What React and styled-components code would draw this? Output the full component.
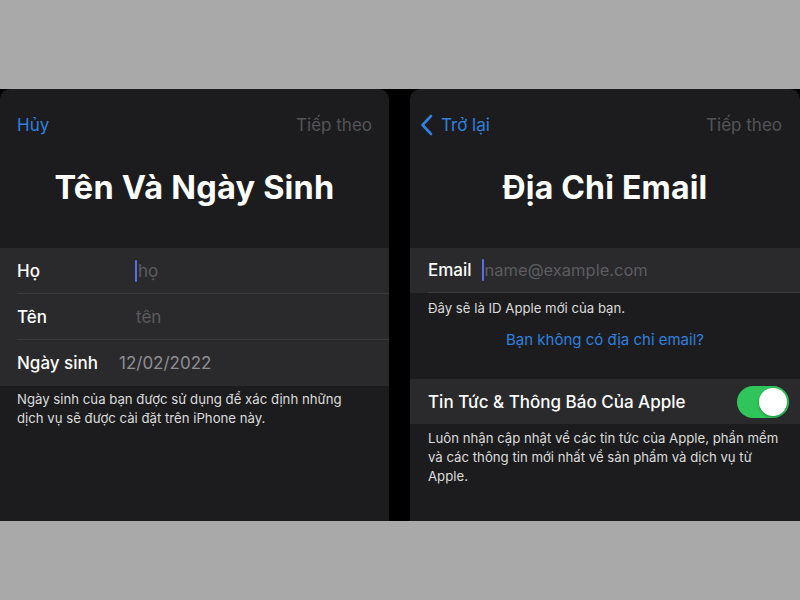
import React from "react"
import styled, { createGlobalStyle } from "styled-components"

const Global = createGlobalStyle`
  html, body {
    margin: 0;
    padding: 0;
    background: #a9a9a9;
    font-family: Inter, "Noto Sans", "Liberation Sans", sans-serif;
    -webkit-font-smoothing: antialiased;
  }
`

const Page = styled.div`
  width: 800px;
  height: 600px;
  display: flex;
  flex-direction: column;
  background: #a9a9a9;
  overflow: hidden;
`

const Band = styled.div`
  margin-top: 89px;
  height: 432px;
  background: #000;
  display: flex;
  gap: 21px;
`

const Sheet = styled.div`
  width: ${(p) => p.$width}px;
  flex: none;
  background: #1c1c1e;
  border-radius: 10px 10px 0 0;
  display: flex;
  flex-direction: column;
`

const Nav = styled.div`
  height: 22px;
  margin-top: 25px;
  padding: 0 ${(p) => p.$right}px 0 ${(p) => p.$left}px;
  display: flex;
  align-items: center;
  justify-content: space-between;
  font-size: 17px;
`

const NavButton = styled.span`
  display: flex;
  align-items: center;
  gap: 8px;
  color: ${(p) => (p.$dim ? "#545458" : "#2f80df")};
`

const Title = styled.h1`
  margin: 33px 0 41px;
  height: 38px;
  line-height: 38px;
  text-align: center;
  color: #fff;
  font-size: ${(p) => p.$size}px;
  font-weight: 700;
  letter-spacing: 0.2px;
`

const Group = styled.div`
  background: #2a2a2c;
`

const Row = styled.div`
  height: ${(p) => p.$h || 46}px;
  margin-left: ${(p) => p.$inset}px;
  padding-right: 11px;
  display: flex;
  align-items: center;
  border-bottom: ${(p) => (p.$last ? "none" : "1px solid #3a3a3c")};
  box-sizing: border-box;
`

const Label = styled.span`
  width: ${(p) => (p.$w ? `${p.$w}px` : "auto")};
  margin-right: ${(p) => p.$gap || 0}px;
  flex: none;
  color: #fff;
  font-size: 17px;
  font-weight: 500;
`

const Field = styled.span`
  display: flex;
  align-items: center;
  color: ${(p) => (p.$value ? "#8e8e93" : "#5c5c60")};
  font-size: ${(p) => p.$size || 17}px;
`

const Caret = styled.span`
  width: 2px;
  height: 22px;
  margin-right: 1px;
  border-radius: 1px;
  background: #5a6de3;
`

const Note = styled.p`
  margin: 0;
  padding: ${(p) => p.$top}px 12px 0 ${(p) => p.$left}px;
  color: #dcdcdc;
  font-size: 13.2px;
  line-height: 19px;
`

const Link = styled.div`
  margin-top: 12px;
  text-align: center;
  color: #2f80df;
  font-size: 15px;
  line-height: 20px;
`

const ToggleRow = styled.div`
  margin-top: 29px;
  height: 45px;
  padding: 0 11px 0 18px;
  background: #2a2a2c;
  display: flex;
  align-items: center;
  justify-content: space-between;
  color: #fff;
  font-size: 17px;
  font-weight: 500;
`

const Switch = styled.span`
  position: relative;
  width: 52px;
  height: 32px;
  border-radius: 16px;
  background: #30c55a;
`

const Knob = styled.span`
  position: absolute;
  top: 2px;
  right: 2px;
  width: 28px;
  height: 28px;
  border-radius: 50%;
  background: #fff;
  box-shadow: 0 1px 3px rgba(0, 0, 0, 0.3);
`

function Chevron() {
  return (
    <svg width="13" height="22" viewBox="0 0 13 22">
      <path
        d="M11 2 L2.5 11 L11 20"
        fill="none"
        stroke="#2f80df"
        strokeWidth="2.6"
        strokeLinecap="round"
        strokeLinejoin="round"
      />
    </svg>
  )
}

export default function App() {
  return (
    <Page>
      <Global />
      <Band>
        <Sheet $width={389}>
          <Nav $left={17} $right={17}>
            <NavButton>Hủy</NavButton>
            <NavButton $dim>Tiếp theo</NavButton>
          </Nav>
          <Title $size={32.5}>Tên Và Ngày Sinh</Title>
          <Group>
            <Row $inset={17}>
              <Label $w={118}>Họ</Label>
              <Field>
                <Caret />
                họ
              </Field>
            </Row>
            <Row $inset={17}>
              <Label $w={119}>Tên</Label>
              <Field>tên</Field>
            </Row>
            <Row $inset={17} $last>
              <Label $gap={21}>Ngày sinh</Label>
              <Field $value>12/02/2022</Field>
            </Row>
          </Group>
          <Note $left={17} $top={4}>
            Ngày sinh của bạn được sử dụng để xác định những
            <br />
            dịch vụ sẽ được cài đặt trên iPhone này.
          </Note>
        </Sheet>

        <Sheet $width={390}>
          <Nav $left={10} $right={18}>
            <NavButton>
              <Chevron />
              Trở lại
            </NavButton>
            <NavButton $dim>Tiếp theo</NavButton>
          </Nav>
          <Title $size={32}>Địa Chỉ Email</Title>
          <Group>
            <Row $inset={18} $h={45}>
              <Label $gap={10}>Email</Label>
              <Field $size={16.5}>
                <Caret />
                name@example.com
              </Field>
            </Row>
          </Group>
          <Note $left={18} $top={6}>Đây sẽ là ID Apple mới của bạn.</Note>
          <Link>Bạn không có địa chỉ email?</Link>
          <ToggleRow>
            Tin Tức &amp; Thông Báo Của Apple
            <Switch>
              <Knob />
            </Switch>
          </ToggleRow>
          <Note $left={18} $top={5}>
            Luôn nhận cập nhật về các tin tức của Apple, phần mềm
            <br />
            và các thông tin mới nhất về sản phẩm và dịch vụ từ
            <br />
            Apple.
          </Note>
        </Sheet>
      </Band>
    </Page>
  )
}
